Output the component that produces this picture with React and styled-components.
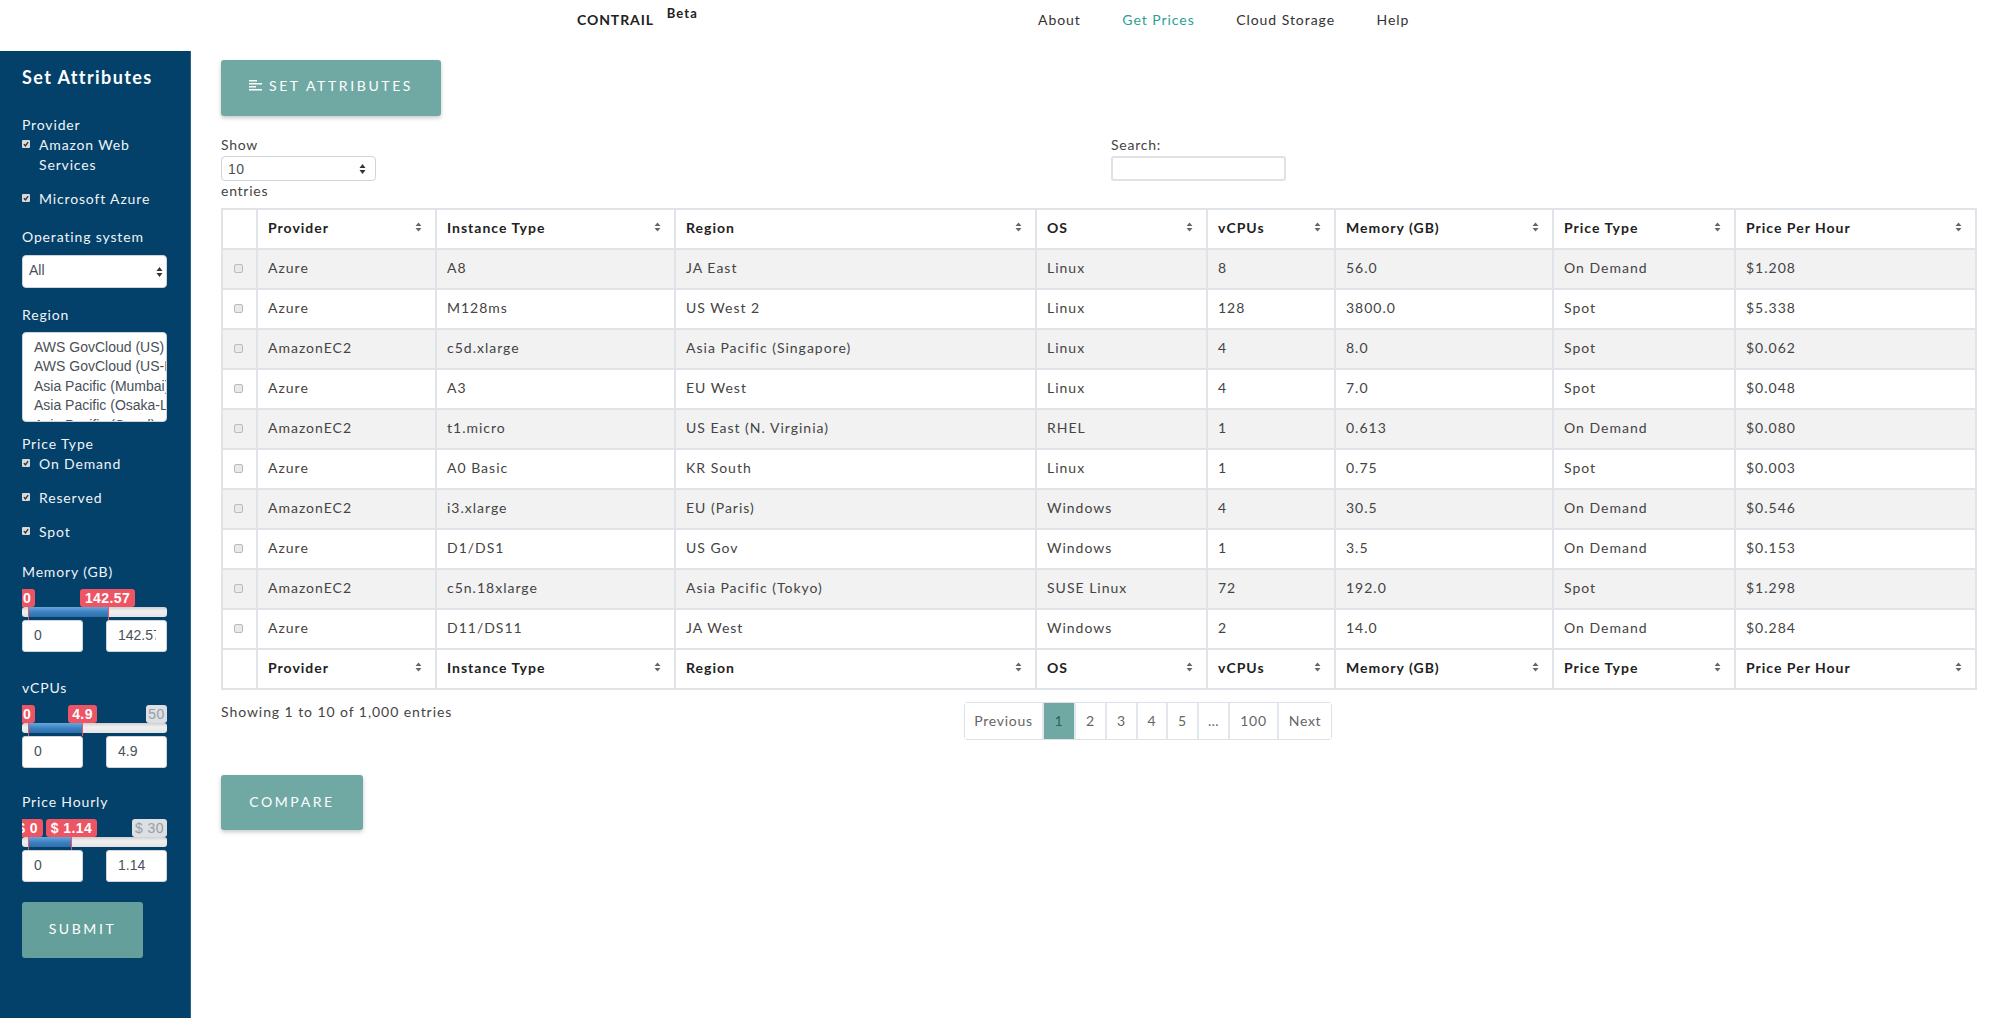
import React from 'react'
import styled, { createGlobalStyle } from 'styled-components'

const Global = createGlobalStyle`
  html, body { margin: 0; padding: 0; background: #fff; }
  body { font-family: "Lato", "Open Sans", sans-serif; font-size: 14px; color: #212529; overflow: hidden; }
  * { box-sizing: border-box; }
`

const Page = styled.div`
  display: flex;
  flex-direction: column;
  height: 1018px;
`
const TopBar = styled.header`
  height: 51px;
  flex: none;
  display: flex;
  padding-left: 577px;
`
const Brand = styled.div`
  width: 461px;
  padding-top: 10px;
  font-size: 14px;
  line-height: 20px;
  font-weight: 700;
  letter-spacing: 0.9px;
  color: #222;
`
const Beta = styled.sup`
  font-size: 13px;
  font-weight: 700;
  letter-spacing: 1.1px;
  position: relative;
  top: -7px;
  margin-left: 9px;
  line-height: 0;
  vertical-align: baseline;
`
const NavMenu = styled.nav`
  display: flex;
  gap: 41.5px;
  padding-top: 10px;
`
const NavLink = styled.a`
  font-size: 14px;
  line-height: 20px;
  letter-spacing: 0.95px;
  color: ${(p) => (p.$active ? '#2aa198' : '#333')};
`
const Body = styled.div`
  flex: 1;
  display: flex;
  min-height: 0;
`
const Sidebar = styled.aside`
  width: 191px;
  flex: none;
  background: #03406a;
  border-right: 1px solid #2d6285;
  padding: 14px 0 0 22px;
  color: #f1f4f6;
  letter-spacing: 0.85px;
`
const SideTitle = styled.h3`
  margin: 0 0 26px;
  font-size: 18px;
  line-height: 24px;
  font-weight: 700;
  color: #fff;
  letter-spacing: 1.4px;
`
const SideLabel = styled.div`
  line-height: 20px;
  margin-top: ${(p) => p.$mt || 0}px;
`
const CheckRow = styled.label`
  display: flex;
  width: 146px;
  line-height: 20px;
  margin-top: ${(p) => p.$mt || 0}px;
`
const CheckBox = styled.span`
  flex: none;
  width: 8px;
  height: 8px;
  margin: 5px 9px 0 0;
  background: #d9d9d9;
  border-radius: 1px;
  display: flex;
  align-items: center;
  justify-content: center;
`
const SelectWrap = styled.div`
  position: relative;
  width: ${(p) => p.$w}px;
  height: ${(p) => p.$h}px;
  margin-top: ${(p) => p.$mt || 0}px;
`
const Select = styled.select`
  appearance: none;
  width: 100%;
  height: 100%;
  background: #fff;
  border: 1px solid #ced4da;
  border-radius: 4px;
  font-family: "Liberation Sans", sans-serif;
  font-size: 14px;
  color: #495057;
  padding: 0 0 ${(p) => p.$pb || 0}px 6px;
  letter-spacing: ${(p) => p.$ls || 0}px;
`
const SelectArrows = styled.svg`
  position: absolute;
  right: ${(p) => p.$r}px;
  top: 50%;
  transform: translateY(-50%);
`
const RegionList = styled.div`
  width: 145px;
  height: 90px;
  margin-top: 7px;
  background: #fff;
  border: 1px solid #ced4da;
  border-radius: 4px;
  overflow: hidden;
  padding: 5px 0 0 11px;
  font-family: "Liberation Sans", sans-serif;
  font-size: 14px;
  line-height: 19.4px;
  color: #495057;
  letter-spacing: 0;
  white-space: nowrap;
`
const SliderBox = styled.div`
  position: relative;
  width: 145px;
  height: 31px;
  margin-top: 7px;
  overflow: hidden;
`
const Track = styled.div`
  position: absolute;
  left: 0;
  right: 0;
  top: 18px;
  height: 10px;
  border-radius: 3px;
  background: linear-gradient(#cfcfcf, #f0f0f0 40%, #e4e4e4);
`
const Fill = styled.div`
  position: absolute;
  top: 18px;
  height: 10px;
  left: 6px;
  width: ${(p) => p.$w}px;
  background: linear-gradient(#6aa7d8, #3b82c4 50%, #2f6fa9);
`
const Handle = styled.div`
  position: absolute;
  top: 18px;
  bottom: 0;
  width: 1px;
  left: ${(p) => p.$x}px;
  background: #ef5566;
`
const Bubble = styled.div`
  position: absolute;
  top: 0;
  height: 18px;
  left: ${(p) => p.$x}px;
  width: ${(p) => p.$w}px;
  border-radius: 3px;
  background: ${(p) => (p.$muted ? '#dcdfe3' : '#ed5565')};
  color: ${(p) => (p.$muted ? '#9a9ea3' : '#fff')};
  font-family: "Liberation Sans", sans-serif;
  font-size: 14px;
  font-weight: ${(p) => (p.$muted ? 400 : 700)};
  letter-spacing: 0.4px;
  line-height: 18px;
  text-align: center;
  white-space: nowrap;
`
const RangeInputs = styled.div`
  display: flex;
  justify-content: space-between;
  width: 145px;
  height: 32px;
`
const RangeInput = styled.input`
  width: 61px;
  height: 32px;
  background: #fff;
  border: 1px solid #ced4da;
  border-radius: 3px;
  padding: 0 10px 2px 11px;
  font-family: "Liberation Sans", sans-serif;
  font-size: 14px;
  color: #495057;
  outline: none;
`
const Button = styled.button`
  display: flex;
  align-items: center;
  justify-content: center;
  gap: 7px;
  width: ${(p) => p.$w}px;
  height: ${(p) => p.$h || 56}px;
  margin-top: ${(p) => p.$mt || 0}px;
  padding: 0 0 ${(p) => p.$pb ?? 3}px;
  border: none;
  border-radius: 3px;
  background: ${(p) => p.$bg || '#70a9a4'};
  box-shadow: ${(p) => (p.$flat ? 'none' : '0 2px 4px rgba(0, 0, 0, 0.22)')};
  color: #fff;
  font-family: "Lato", sans-serif;
  font-size: 14px;
  letter-spacing: 2.6px;
`
const Main = styled.main`
  flex: 1;
  min-width: 0;
  padding: 9px 22px 0 30px;
`
const FilterRow = styled.div`
  display: grid;
  grid-template-columns: 890px 175px;
  margin-top: 19px;
  line-height: 20px;
  letter-spacing: 0.75px;
  color: #444;
`
const SearchInput = styled.input`
  display: block;
  width: 175px;
  height: 25px;
  margin-top: 1px;
  border: 2px solid #dee2e6;
  border-radius: 3px;
`
const Grid = styled.table`
  table-layout: fixed;
  border-collapse: collapse;
  width: 1754px;
  margin-top: 7px;
  letter-spacing: 1px;
`
const Cell = styled.td`
  height: 40px;
  padding: 0 10px 4px;
  border: 2px solid #e0e4e9;
  color: #444;
  white-space: nowrap;
`
const Head = styled.th`
  height: 40px;
  padding: 0 10px 4px;
  border: 2px solid #e0e4e9;
  background: #fff;
  color: #222;
  font-weight: 700;
  text-align: left;
  white-space: nowrap;
`
const HeadInner = styled.div`
  display: flex;
  align-items: center;
  justify-content: space-between;
  padding-right: 3px;
`
const Row = styled.tr`
  background: ${(p) => (p.$odd ? '#f2f2f2' : '#fff')};
`
const TickCell = styled(Cell)`
  padding: 0 3px 2px 0;
  text-align: center;
  line-height: 0;
`
const RowCheck = styled.input`
  appearance: none;
  width: 9px;
  height: 9px;
  margin: 0;
  border: 1px solid #b9bcbf;
  border-radius: 2px;
  background: #e9e9e9;
`
const FootRow = styled.div`
  display: grid;
  grid-template-columns: 743px auto;
  margin-top: 12px;
`
const Info = styled.div`
  line-height: 20px;
  letter-spacing: 0.93px;
  color: #444;
`
const Pager = styled.div`
  display: flex;
  width: 368px;
  height: 38px;
  border: 1px solid #dee2e6;
  border-radius: 3px;
`
const PageItem = styled.a`
  width: ${(p) => p.$w}px;
  flex: none;
  display: flex;
  align-items: center;
  justify-content: center;
  padding-bottom: 1px;
  border-right: ${(p) => (p.$last ? 'none' : '2px solid #e3e6ea')};
  background: ${(p) => (p.$active ? '#70a9a4' : '#fff')};
  color: ${(p) => (p.$active ? '#2f5f5b' : '#666')};
  letter-spacing: 0.7px;
`

const SortIcon = () => (
  <svg width="7" height="10" viewBox="0 0 7 10">
    <path d="M3.5 0.5 L6.5 4 L0.5 4 Z M3.5 9.5 L6.5 6 L0.5 6 Z" fill="#666" />
  </svg>
)

const Check = () => (
  <svg width="6" height="6" viewBox="0 0 7 7">
    <path d="M1 3.6 L2.8 5.6 L6 1.2" fill="none" stroke="#333" strokeWidth="1.6" />
  </svg>
)

const Tick = ({ children, mt }) => (
  <CheckRow $mt={mt}>
    <CheckBox><Check /></CheckBox>
    <span>{children}</span>
  </CheckRow>
)

const Dropdown = ({ w, h, mt, value, ls, pb, arrowRight }) => (
  <SelectWrap $w={w} $h={h} $mt={mt}>
    <Select value={value} $ls={ls} $pb={pb} onChange={() => {}}>
      <option>{value}</option>
    </Select>
    <SelectArrows $r={arrowRight} width="7" height="11" viewBox="0 0 7 11">
      <path d="M3.5 0.5 L6.5 4.5 L0.5 4.5 Z M3.5 10.5 L6.5 6.5 L0.5 6.5 Z" fill="#333" />
    </SelectArrows>
  </SelectWrap>
)

const Slider = ({ fillW, from, to, max, lo, hi }) => (
  <>
    <SliderBox>
      <Track />
      <Fill $w={fillW} />
      <Handle $x={6} />
      <Handle $x={6 + fillW} />
      {max && <Bubble $muted $x={max.x} $w={max.w}>{max.text}</Bubble>}
      <Bubble $x={from.x} $w={from.w}>{from.text}</Bubble>
      <Bubble $x={to.x} $w={to.w}>{to.text}</Bubble>
    </SliderBox>
    <RangeInputs>
      <RangeInput value={lo} readOnly />
      <RangeInput value={hi} readOnly />
    </RangeInputs>
  </>
)

const columns = [
  ['', 35],
  ['Provider', 179],
  ['Instance Type', 239],
  ['Region', 361],
  ['OS', 171],
  ['vCPUs', 128],
  ['Memory (GB)', 218],
  ['Price Type', 182],
  ['Price Per Hour', 241],
]

const rows = [
  ['Azure', 'A8', 'JA East', 'Linux', '8', '56.0', 'On Demand', '$1.208'],
  ['Azure', 'M128ms', 'US West 2', 'Linux', '128', '3800.0', 'Spot', '$5.338'],
  ['AmazonEC2', 'c5d.xlarge', 'Asia Pacific (Singapore)', 'Linux', '4', '8.0', 'Spot', '$0.062'],
  ['Azure', 'A3', 'EU West', 'Linux', '4', '7.0', 'Spot', '$0.048'],
  ['AmazonEC2', 't1.micro', 'US East (N. Virginia)', 'RHEL', '1', '0.613', 'On Demand', '$0.080'],
  ['Azure', 'A0 Basic', 'KR South', 'Linux', '1', '0.75', 'Spot', '$0.003'],
  ['AmazonEC2', 'i3.xlarge', 'EU (Paris)', 'Windows', '4', '30.5', 'On Demand', '$0.546'],
  ['Azure', 'D1/DS1', 'US Gov', 'Windows', '1', '3.5', 'On Demand', '$0.153'],
  ['AmazonEC2', 'c5n.18xlarge', 'Asia Pacific (Tokyo)', 'SUSE Linux', '72', '192.0', 'Spot', '$1.298'],
  ['Azure', 'D11/DS11', 'JA West', 'Windows', '2', '14.0', 'On Demand', '$0.284'],
]

const pages = [
  ['Previous', 79],
  ['1', 32, true],
  ['2', 31],
  ['3', 31],
  ['4', 30],
  ['5', 31],
  ['…', 31],
  ['100', 49],
  ['Next', 52],
]

const regions = [
  'AWS GovCloud (US)',
  'AWS GovCloud (US-East)',
  'Asia Pacific (Mumbai)',
  'Asia Pacific (Osaka-Local)',
  'Asia Pacific (Seoul)',
]

const HeaderCells = () => (
  <tr>
    {columns.map(([name], i) => (
      <Head key={i}>
        {name && (
          <HeadInner>
            {name}
            <SortIcon />
          </HeadInner>
        )}
      </Head>
    ))}
  </tr>
)

const App = () => {
  return (
    <Page>
      <Global />
      <TopBar>
        <Brand>CONTRAIL <Beta>Beta</Beta></Brand>
        <NavMenu>
          <NavLink>About</NavLink>
          <NavLink $active>Get Prices</NavLink>
          <NavLink>Cloud Storage</NavLink>
          <NavLink>Help</NavLink>
        </NavMenu>
      </TopBar>
      <Body>
        <Sidebar>
          <SideTitle>Set Attributes</SideTitle>
          <SideLabel>Provider</SideLabel>
          <Tick>Amazon Web Services</Tick>
          <Tick mt={14}>Microsoft Azure</Tick>
          <SideLabel $mt={18}>Operating system</SideLabel>
          <Dropdown w={145} h={33} mt={8} value="All" pb={3} arrowRight={4} />
          <SideLabel $mt={17}>Region</SideLabel>
          <RegionList>
            {regions.map((r) => <div key={r}>{r}</div>)}
          </RegionList>
          <SideLabel $mt={12}>Price Type</SideLabel>
          <Tick>On Demand</Tick>
          <Tick mt={13.5}>Reserved</Tick>
          <Tick mt={14}>Spot</Tick>
          <SideLabel $mt={20}>Memory (GB)</SideLabel>
          <Slider
            fillW={80}
            from={{ x: -3, w: 16, text: '0' }}
            to={{ x: 58, w: 55, text: '142.57' }}
            lo="0"
            hi="142.57"
          />
          <SideLabel $mt={26}>vCPUs</SideLabel>
          <Slider
            fillW={54}
            from={{ x: -3, w: 16, text: '0' }}
            to={{ x: 46, w: 29, text: '4.9' }}
            max={{ x: 124, w: 21, text: '50' }}
            lo="0"
            hi="4.9"
          />
          <SideLabel $mt={24}>Price Hourly</SideLabel>
          <Slider
            fillW={43}
            from={{ x: -10, w: 31, text: '$ 0' }}
            to={{ x: 24, w: 51, text: '$ 1.14' }}
            max={{ x: 110, w: 35, text: '$ 30' }}
            lo="0"
            hi="1.14"
          />
          <Button $w={121} $mt={20} $bg="#659f9b" $flat>SUBMIT</Button>
        </Sidebar>
        <Main>
          <Button $w={220} $pb={5}>
            <svg width="13" height="13" viewBox="0 0 13 13">
              <path d="M0 1h8v1.6H0zM0 4h13v1.6H0zM0 7h7v1.6H0zM0 10h13v1.6H0z" fill="#fff" />
            </svg>
            SET ATTRIBUTES
          </Button>
          <FilterRow>
            <div>
              Show
              <Dropdown w={155} h={25} mt={1} value="10" ls={0.5} arrowRight={10} />
              entries
            </div>
            <div>
              Search:
              <SearchInput />
            </div>
          </FilterRow>
          <Grid>
            <colgroup>
              {columns.map(([name, w], i) => <col key={i} width={w} />)}
            </colgroup>
            <thead>
              <HeaderCells />
            </thead>
            <tbody>
              {rows.map((row, i) => (
                <Row key={i} $odd={i % 2 === 0}>
                  <TickCell><RowCheck type="checkbox" /></TickCell>
                  {row.map((v, j) => <Cell key={j}>{v}</Cell>)}
                </Row>
              ))}
            </tbody>
            <tfoot>
              <HeaderCells />
            </tfoot>
          </Grid>
          <FootRow>
            <Info>Showing 1 to 10 of 1,000 entries</Info>
            <Pager>
              {pages.map(([label, w, active], i) => (
                <PageItem key={label} $w={w} $active={active} $last={i === pages.length - 1}>
                  {label}
                </PageItem>
              ))}
            </Pager>
          </FootRow>
          <Button $w={142} $h={55} $mt={35} $pb={2}>COMPARE</Button>
        </Main>
      </Body>
    </Page>
  )
}

export default App
